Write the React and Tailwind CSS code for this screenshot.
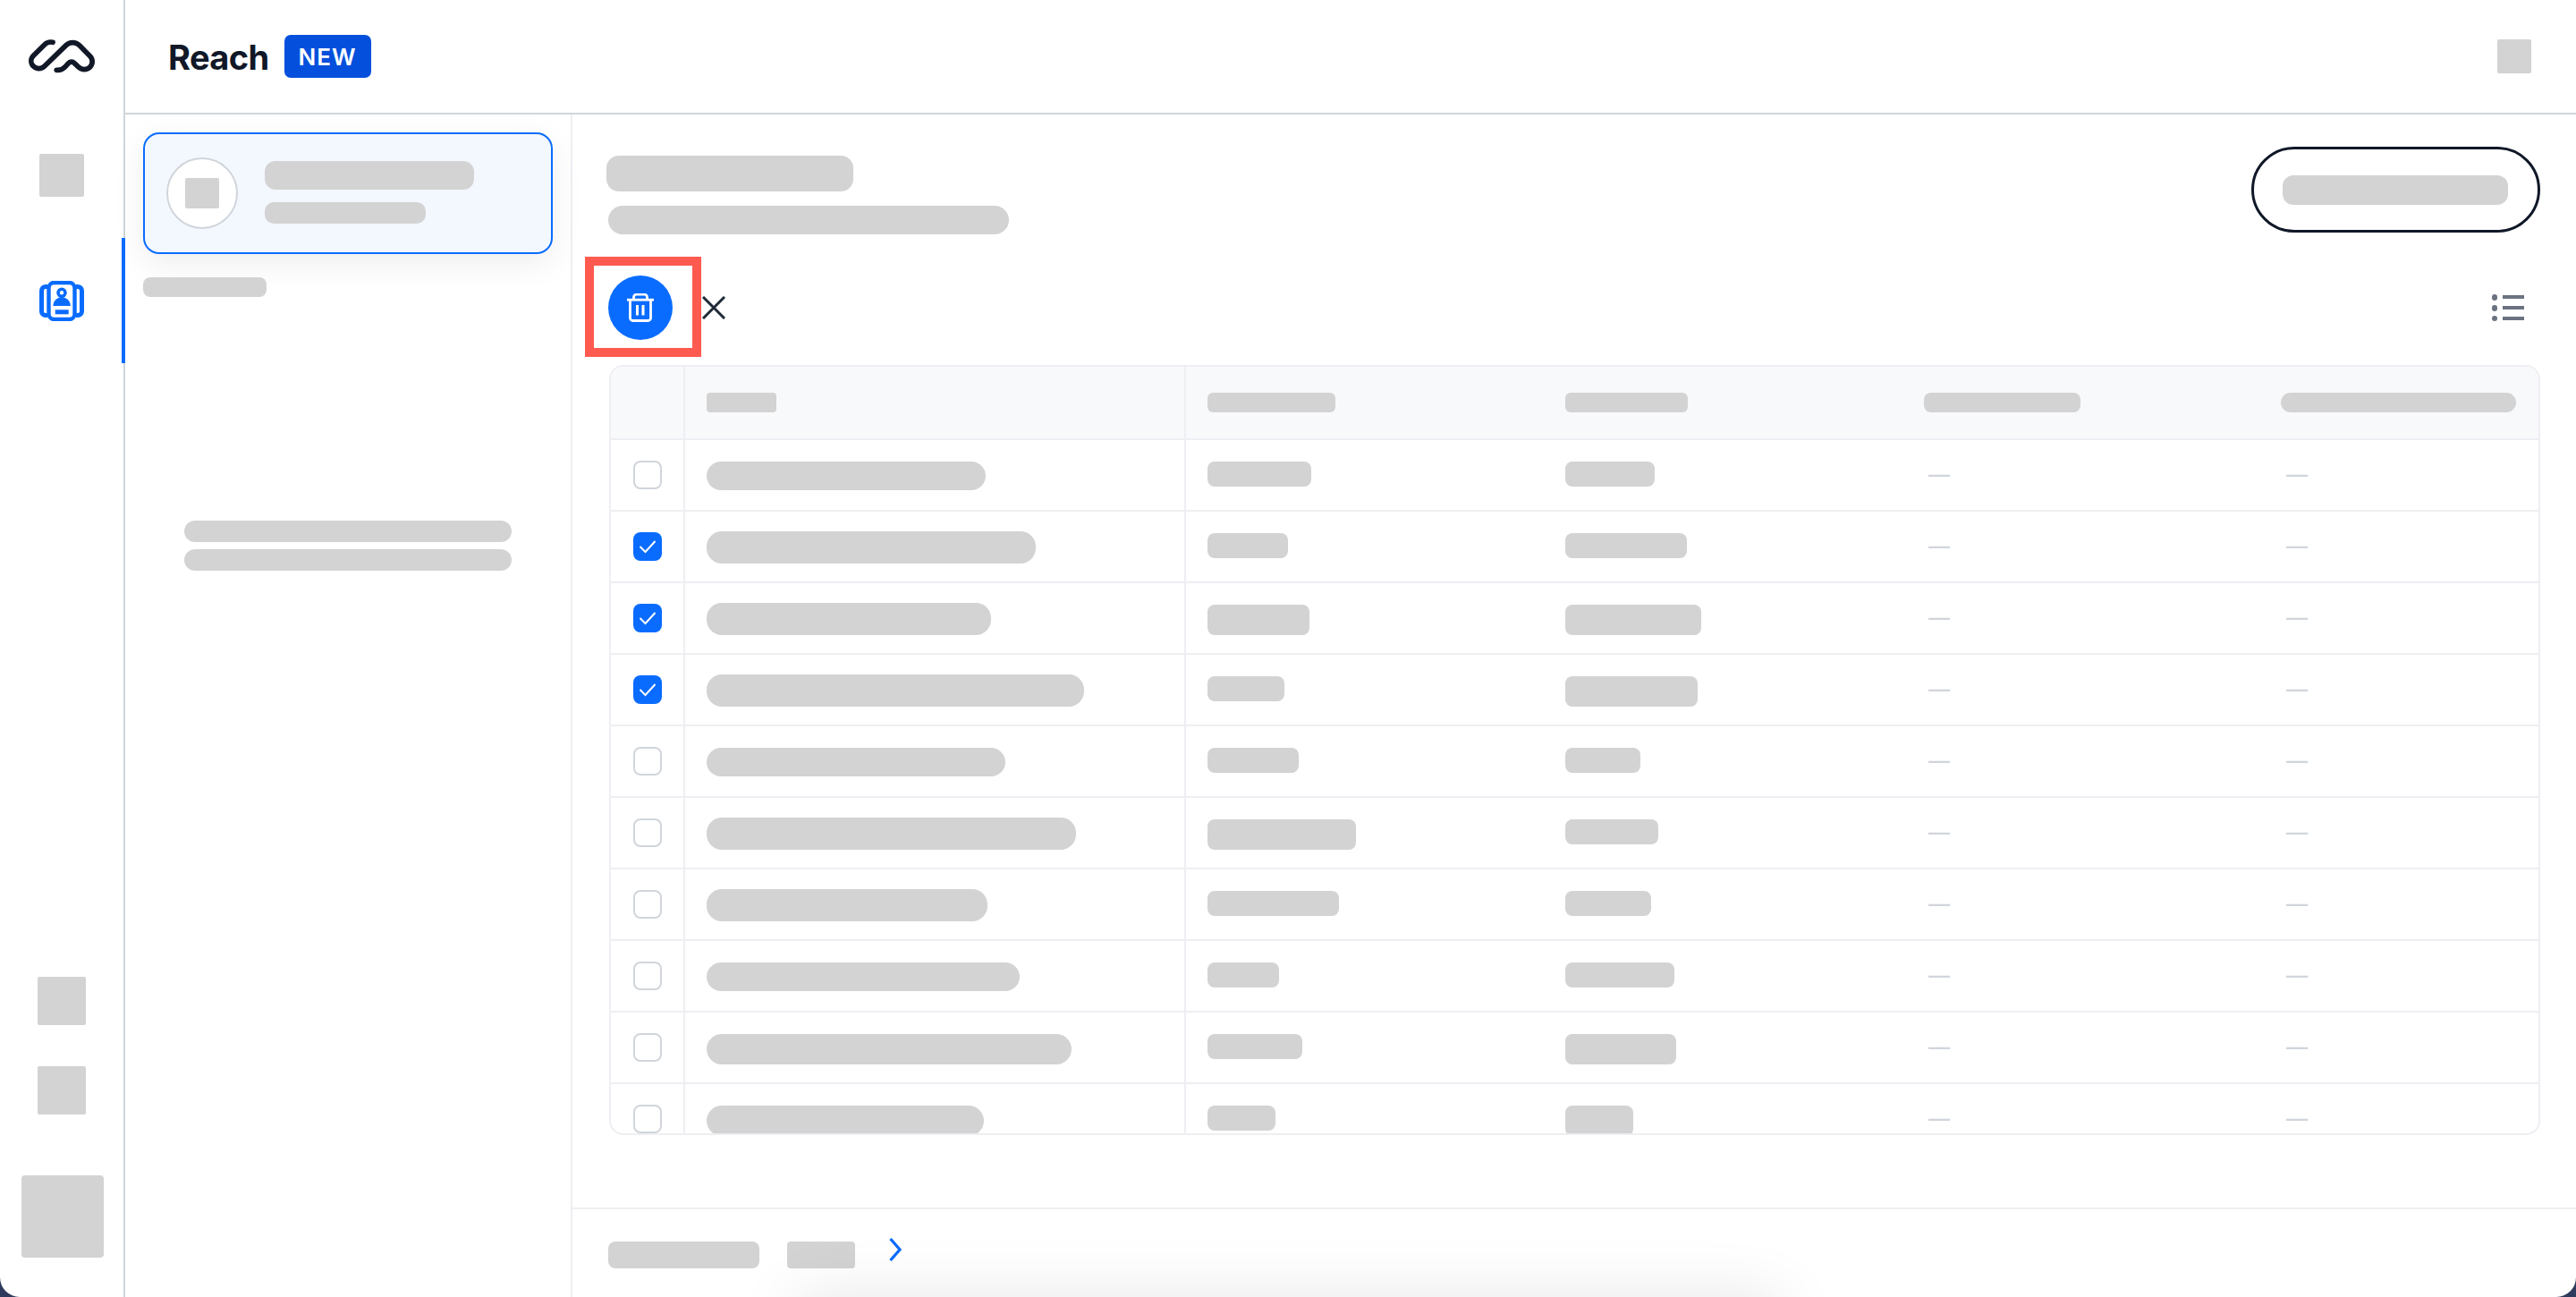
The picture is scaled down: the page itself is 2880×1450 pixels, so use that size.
import React from "react";

const rows = [
  { name: [312, 32, 24], a: [116, 28], b: [100, 28], on: false },
  { name: [368, 36, 22], a: [90, 28], b: [136, 28], on: true },
  { name: [318, 36, 22], a: [114, 34], b: [152, 34], on: true },
  { name: [422, 36, 22], a: [86, 28], b: [148, 34], on: true },
  { name: [334, 32, 24], a: [102, 28], b: [84, 28], on: false },
  { name: [413, 36, 22], a: [166, 34], b: [104, 28], on: false },
  { name: [314, 36, 22], a: [147, 28], b: [96, 28], on: false },
  { name: [350, 32, 24], a: [80, 28], b: [122, 28], on: false },
  { name: [408, 34, 24], a: [106, 28], b: [124, 34], on: false },
  { name: [310, 34, 24], a: [76, 28], b: [76, 34], on: false },
];

function Logo() {
  return (
    <svg width="74" height="38" viewBox="97 73 221 112" fill="none" stroke="#111827" strokeWidth="17" strokeLinecap="round" strokeLinejoin="round">
      <path d="M178 82 C168 80 158 82 150 90 L113 127 C103 137 103 152 113 162 C123 172 140 172 150 162 L222 92 C234 80 254 80 266 92 L302 128 C312 138 312 155 302 165 C292 175 274 175 264 165 L250 152 C244 146 236 146 230 152 L220 163 C212 172 200 176 190 175" />
    </svg>
  );
}

function ContactsIcon() {
  return (
    <svg width="50" height="45" viewBox="0 0 50 45" fill="none" stroke="#0a6cff">
      <rect x="10.5" y="2" width="29" height="41" rx="6" strokeWidth="4.4" />
      <path d="M9 6.5 H7 a4.5 4.5 0 0 0 -4.5 4.5 V34 a4.5 4.5 0 0 0 4.5 4.5 H9" strokeWidth="5" />
      <path d="M41 6.5 H43 a4.5 4.5 0 0 1 4.5 4.5 V34 a4.5 4.5 0 0 1 -4.5 4.5 H41" strokeWidth="5" />
      <circle cx="25" cy="13.3" r="4" strokeWidth="3.6" />
      <path d="M15.3 28 a9.8 9.8 0 0 1 19.6 0 z" fill="#0a6cff" stroke="none" />
      <rect x="17.7" y="32.3" width="15" height="5" fill="#0a6cff" stroke="none" />
    </svg>
  );
}

function TrashIcon() {
  return (
    <svg width="30" height="32" viewBox="0 0 30 32" fill="none" stroke="#ffffff" strokeWidth="2.8">
      <path d="M7.5 7 V4.2 a3 3 0 0 1 3 -3 h9 a3 3 0 0 1 3 3 V7" />
      <path d="M0 7.2 H30" />
      <path d="M3.5 7 V27.5 a3 3 0 0 0 3 3 h17 a3 3 0 0 0 3 -3 V7" />
      <rect x="10" y="13" width="3" height="11.5" fill="#ffffff" stroke="none" />
      <rect x="16.5" y="13" width="3" height="11.5" fill="#ffffff" stroke="none" />
    </svg>
  );
}

function CloseIcon() {
  return (
    <svg width="26" height="26" viewBox="0 0 26 26" fill="none" stroke="#1f2937" strokeWidth="3">
      <path d="M1 1 L25 25 M25 1 L1 25" />
    </svg>
  );
}

function ListIcon() {
  return (
    <svg className="mt-[2px]" width="36" height="30" viewBox="0 0 36 30" fill="#6b7280">
      <rect x="0" y="0" width="6" height="7" rx="3" />
      <rect x="12" y="1" width="24" height="4" />
      <rect x="0" y="12" width="6" height="7" rx="3" />
      <rect x="12" y="13" width="24" height="4" />
      <rect x="0" y="24" width="6" height="6" rx="3" />
      <rect x="12" y="25" width="24" height="4" />
    </svg>
  );
}

function Check() {
  return (
    <svg width="20" height="16" viewBox="0 0 20 16" fill="none" stroke="#ffffff" strokeWidth="2">
      <path d="M1.5 8 L7.5 14 L18.5 2" />
    </svg>
  );
}

function Bar({ w, h, top = 0, round = "rounded-lg" }) {
  return <div className={`bg-[#d3d3d3] shrink-0 ${round}`} style={{ width: w, height: h, marginTop: top }} />;
}

function Dash() {
  return <span className="text-[#d1d5db] text-[24px] font-medium leading-[78px] [font-family:Inter,sans-serif]">—</span>;
}

export default function App() {
  return (
    <div className="relative w-[2880px] h-[1450px] overflow-hidden bg-[#2f3b5c] [font-family:Inter,sans-serif]">
      <div className="flex w-full h-full bg-white rounded-b-[22px] overflow-hidden">
        <aside className="flex flex-col items-center w-[140px] h-full shrink-0 border-r-2 border-[#d1d5db] pt-[44px] pb-[44px]">
          <Logo />
          <div className="w-[50px] h-[48px] bg-[#d3d3d3] rounded-[2px] mt-[90px]" />
          <div className="relative flex items-center justify-center w-full h-[140px] mt-[46px]">
            <ContactsIcon />
            <div className="absolute right-[-2px] top-0 w-[4px] h-full bg-[#0a6cff]" />
          </div>
          <div className="w-[54px] h-[54px] bg-[#d3d3d3] rounded-[2px] mt-auto" />
          <div className="w-[54px] h-[54px] bg-[#d3d3d3] rounded-[2px] mt-[46px]" />
          <div className="w-[92px] h-[92px] bg-[#d3d3d3] rounded-[4px] mt-[68px] ml-[2px]" />
        </aside>

        <div className="flex flex-col flex-1 min-w-0">
          <header className="flex items-center justify-between h-[128px] shrink-0 border-b-2 border-[#d1d5db] pl-[48px] pr-[50px]">
            <div className="flex items-center">
              <span className="text-[38px] leading-none font-bold text-[#111827] tracking-[-0.6px] mt-[2px]">Reach</span>
              <span className="flex items-center justify-center w-[97px] h-[48px] ml-[17px] rounded-[7px] bg-[#0450dc] text-white text-[26px] font-semibold tracking-[1px]">NEW</span>
            </div>
            <div className="w-[38px] h-[38px] bg-[#d3d3d3] rounded-[2px]" />
          </header>

          <div className="flex flex-1 min-h-0">
            <section className="flex flex-col w-[500px] shrink-0 border-r-2 border-[#eeeef3] pl-[20px] pr-[20px] pt-[20px]">
              <div className="flex items-center w-[458px] h-[136px] shrink-0 rounded-[18px] border-2 border-[#0a6cff] bg-[#f3f8ff] pl-[24px] shadow-[0_10px_36px_rgba(0,0,0,0.07)]">
                <div className="flex items-center justify-center w-[80px] h-[80px] rounded-full border-2 border-[#d1d5db] bg-white">
                  <div className="w-[38px] h-[34px] bg-[#d3d3d3] rounded-[2px]" />
                </div>
                <div className="flex flex-col ml-[30px] mt-[-2px]">
                  <div className="w-[234px] h-[32px] bg-[#d3d3d3] rounded-[12px]" />
                  <div className="w-[180px] h-[24px] bg-[#d3d3d3] rounded-[10px] mt-[14px]" />
                </div>
              </div>
              <div className="w-[138px] h-[22px] bg-[#d3d3d3] rounded-[8px] mt-[26px]" />
              <div className="flex flex-col items-center mt-[250px]">
                <div className="w-[366px] h-[24px] bg-[#d3d3d3] rounded-full" />
                <div className="w-[366px] h-[24px] bg-[#d3d3d3] rounded-full mt-[8px]" />
              </div>
            </section>

            <main className="flex flex-col flex-1 min-w-0">
              <div className="flex justify-between items-start h-[132px] shrink-0 pt-[36px] pl-[38px] pr-[40px]">
                <div className="flex flex-col pt-[10px]">
                  <div className="w-[276px] h-[40px] bg-[#d3d3d3] rounded-[14px]" />
                  <div className="w-[448px] h-[32px] bg-[#d3d3d3] rounded-full mt-[16px] ml-[2px]" />
                </div>
                <div className="flex items-center justify-center w-[323px] h-[96px] rounded-full border-[3px] border-[#101828]">
                  <div className="w-[252px] h-[33px] bg-[#d3d3d3] rounded-[12px] mr-[2px]" />
                </div>
              </div>

              <div className="flex items-center justify-between h-[112px] mt-[27px] pl-[14px] pr-[58px] shrink-0">
                <div className="flex items-center">
                  <div className="flex items-center w-[130px] h-[112px] border-[10px] border-[#ff5a4f] pl-[16px]">
                    <button className="flex items-center justify-center w-[72px] h-[72px] mt-[2px] rounded-full bg-[#0a6cff]">
                      <TrashIcon />
                    </button>
                  </div>
                  <div className="ml-[1px] mt-[2px] flex">
                    <CloseIcon />
                  </div>
                </div>
                <ListIcon />
              </div>

              <div className="flex flex-col h-[861px] mt-[9px] ml-[41px] mr-[40px] shrink-0 rounded-[16px] border-2 border-[#eeeef3] overflow-hidden">
                <div className="flex h-[82px] shrink-0 bg-[#f8f9fb] border-b-2 border-[#eeeef3]">
                  <div className="w-[83px] shrink-0 border-r-2 border-[#eeeef3]" />
                  <div className="flex items-center w-[560px] shrink-0 border-r-2 border-[#eeeef3] pl-[24px]">
                    <Bar w={78} h={22} round="rounded-[4px]" />
                  </div>
                  <div className="flex items-center w-[400px] shrink-0 pl-[24px]">
                    <Bar w={143} h={22} round="rounded-[6px]" />
                  </div>
                  <div className="flex items-center w-[401px] shrink-0 pl-[24px]">
                    <Bar w={137} h={22} round="rounded-[6px]" />
                  </div>
                  <div className="flex items-center w-[400px] shrink-0 pl-[24px]">
                    <Bar w={175} h={22} round="rounded-[8px]" />
                  </div>
                  <div className="flex items-center flex-1 pl-[23px]">
                    <Bar w={263} h={22} round="rounded-[11px]" />
                  </div>
                </div>

                {rows.map((r, i) => (
                  <div key={i} className="flex h-[80px] shrink-0 border-b-2 border-[#eeeef3]">
                    <div className="flex items-center justify-center w-[83px] shrink-0 border-r-2 border-[#eeeef3]">
                      {r.on ? (
                        <div className="flex items-center justify-center w-[32px] h-[32px] rounded-[8px] bg-[#0a6cff]">
                          <Check />
                        </div>
                      ) : (
                        <div className="w-[32px] h-[32px] rounded-[8px] border-2 border-[#d1d5db] bg-white" />
                      )}
                    </div>
                    <div className="flex items-start w-[560px] shrink-0 border-r-2 border-[#eeeef3] pl-[24px]">
                      <Bar w={r.name[0]} h={r.name[1]} top={r.name[2]} round="rounded-[17px]" />
                    </div>
                    <div className="flex items-start w-[400px] shrink-0 pl-[24px]">
                      <Bar w={r.a[0]} h={r.a[1]} top={24} />
                    </div>
                    <div className="flex items-start w-[401px] shrink-0 pl-[24px]">
                      <Bar w={r.b[0]} h={r.b[1]} top={24} />
                    </div>
                    <div className="w-[400px] shrink-0 pl-[29px]">
                      <Dash />
                    </div>
                    <div className="flex-1 pl-[29px]">
                      <Dash />
                    </div>
                  </div>
                ))}
              </div>

              <footer className="flex items-start mt-auto h-[100px] shrink-0 border-t-2 border-[#eeeef3] pl-[40px] pt-[36px]">
                <div className="w-[169px] h-[30px] bg-[#d3d3d3] rounded-[8px]" />
                <div className="w-[76px] h-[30px] bg-[#d3d3d3] rounded-[4px] ml-[31px]" />
                <svg className="ml-[38px] mt-[-4px]" width="14" height="26" viewBox="0 0 14 26" fill="none" stroke="#0a6cff" strokeWidth="3.2">
                  <path d="M1.5 1 L12 13 L1.5 25" />
                </svg>
              </footer>
            </main>
          </div>
        </div>
      </div>
      <div className="absolute left-[890px] bottom-[-60px] w-[1100px] h-[60px] shadow-[0_0_70px_rgba(0,0,0,0.1)]" />
    </div>
  );
}
